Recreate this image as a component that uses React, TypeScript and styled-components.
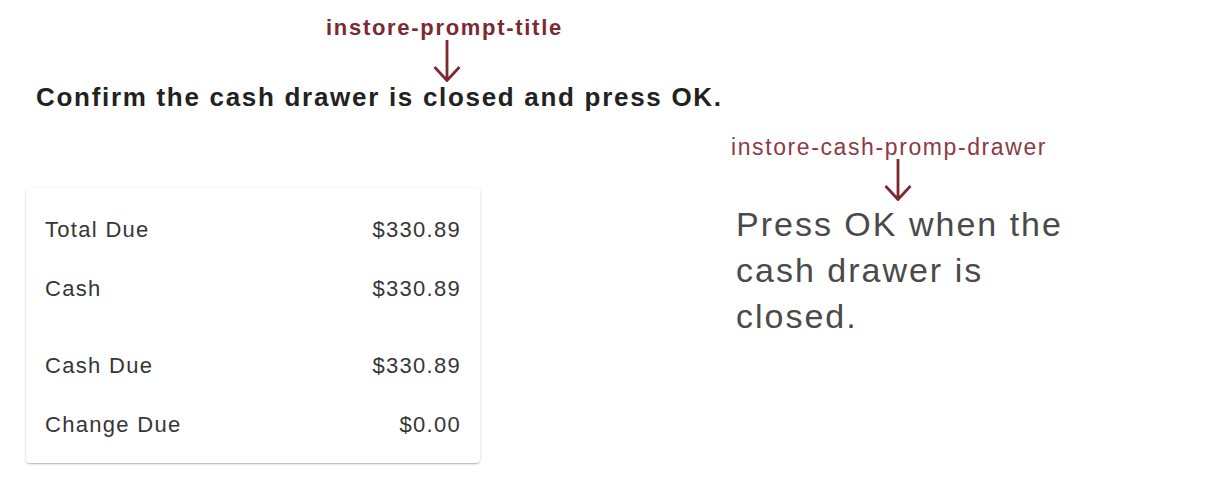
import * as React from 'react'
import styled, { createGlobalStyle } from 'styled-components'

const GlobalStyle = createGlobalStyle`
  body {
    margin: 0;
    background: #ffffff;
    font-family: "Liberation Sans", Arial, Helvetica, sans-serif;
  }
`

const Page = styled.main`
  padding: 15px 0 0 26px;
  width: 1200px;
  height: 473px;
  overflow: hidden;
`

const Header = styled.header`
  display: flex;
  flex-direction: column;
  align-items: flex-start;
`

const Annotation = styled.div<{ $indent: number; $arrowAt: number }>`
  display: flex;
  flex-direction: column;
  align-items: flex-start;
  margin-left: ${(p) => p.$indent}px;

  svg {
    display: block;
    margin-left: ${(p) => p.$arrowAt}px;
  }
`

const AnnotationLabel = styled.span<{ $bold?: boolean }>`
  color: ${(p) => (p.$bold ? '#7b2a31' : '#8c3a44')};
  font-size: ${(p) => (p.$bold ? 22 : 23)}px;
  font-weight: ${(p) => (p.$bold ? 700 : 400)};
  letter-spacing: ${(p) => (p.$bold ? 1.7 : 1.6)}px;
  line-height: ${(p) => (p.$bold ? 25 : 24)}px;
  white-space: nowrap;
`

const Title = styled.h1`
  margin: 0 0 0 10px;
  color: #222222;
  font-size: 26px;
  font-weight: 700;
  letter-spacing: 1.7px;
  line-height: 30px;
  white-space: nowrap;
`

const Body = styled.section`
  display: flex;
  align-items: flex-start;
  margin-top: 23px;
`

const Card = styled.div`
  width: 454px;
  box-sizing: border-box;
  margin-top: 53px;
  padding: 12px 19px 9px 19px;
  display: flex;
  flex-direction: column;
  gap: 18px;
  background: #ffffff;
  border-radius: 4px;
  box-shadow: 0 1px 3px rgba(0, 0, 0, 0.18), 0 1px 1px rgba(0, 0, 0, 0.08),
    0 2px 1px -1px rgba(0, 0, 0, 0.08);
`

const RowGroup = styled.div`
  display: flex;
  flex-direction: column;
`

const Row = styled.div`
  display: flex;
  justify-content: space-between;
  align-items: center;
  height: 59px;
  color: #363636;
  font-size: 22px;
  letter-spacing: 1.3px;
  line-height: 59px;
`

const PromptColumn = styled.div`
  margin-left: 251px;
  display: flex;
  flex-direction: column;
`

const PromptText = styled.p`
  margin: 0 0 0 5px;
  width: 360px;
  color: #4a4a4a;
  font-size: 34px;
  letter-spacing: 2px;
  line-height: 46px;
`

const DownArrow = () => (
  <svg width='30' height='42' viewBox='0 0 30 42' aria-hidden='true'>
    <path
      d='M15 0 V40 M2.5 27 L15 40.5 L27.5 27'
      fill='none'
      stroke='#7b2a31'
      strokeWidth='2.8'
    />
  </svg>
)

type Line = { label: string; amount: string }

const payment: Line[][] = [
  [
    { label: 'Total Due', amount: '$330.89' },
    { label: 'Cash', amount: '$330.89' },
  ],
  [
    { label: 'Cash Due', amount: '$330.89' },
    { label: 'Change Due', amount: '$0.00' },
  ],
]

export default function App() {
  return (
    <>
      <GlobalStyle />
      <Page>
        <Header>
          <Annotation $indent={300} $arrowAt={106}>
            <AnnotationLabel $bold>instore-prompt-title</AnnotationLabel>
            <DownArrow />
          </Annotation>
          <Title>Confirm the cash drawer is closed and press OK.</Title>
        </Header>
        <Body>
          <Card>
            {payment.map((group, i) => (
              <RowGroup key={i}>
                {group.map((line) => (
                  <Row key={line.label}>
                    <span>{line.label}</span>
                    <span>{line.amount}</span>
                  </Row>
                ))}
              </RowGroup>
            ))}
          </Card>
          <PromptColumn>
            <Annotation $indent={0} $arrowAt={152}>
              <AnnotationLabel>instore-cash-promp-drawer</AnnotationLabel>
              <DownArrow />
            </Annotation>
            <PromptText>Press OK when the cash drawer is closed.</PromptText>
          </PromptColumn>
        </Body>
      </Page>
    </>
  )
}
